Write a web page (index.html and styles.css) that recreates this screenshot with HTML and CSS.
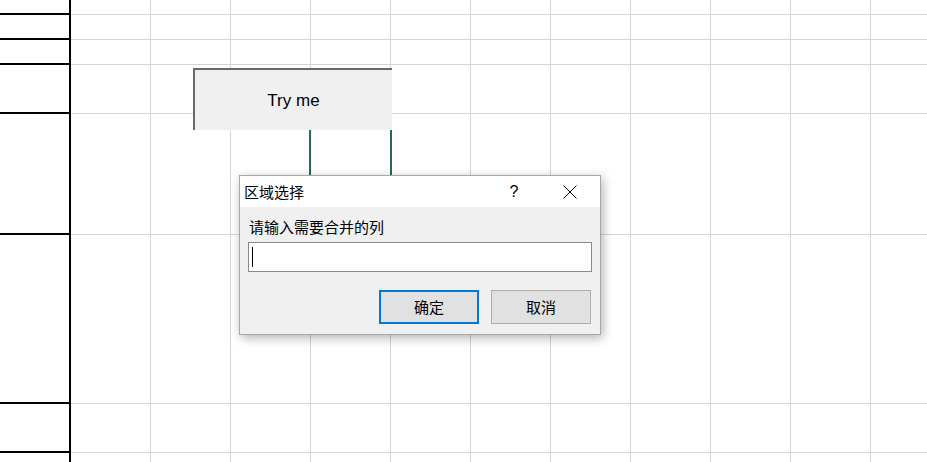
FILE: index.html
```html
<!DOCTYPE html>
<html lang="zh">
<head>
  <meta charset="UTF-8">
  <title>区域选择</title>
  <link rel="stylesheet" href="styles.css">
</head>
<body>

  <!-- worksheet grid -->
  <div class="sheet" id="sheet"></div>

  <!-- selected cell -->
  <div class="selection"></div>

  <!-- shape button on the sheet -->
  <button class="shape-btn">Try me</button>

  <!-- input dialog -->
  <div class="dialog">
    <div class="title-bar">
      <span class="title">区域选择</span>
      <span class="help">?</span>
      <span class="close">
        <svg width="14" height="14" viewBox="0 0 14 14">
          <path d="M0.5 0.5 L13.5 13.5 M13.5 0.5 L0.5 13.5" stroke="#000" stroke-width="1" fill="none"/>
        </svg>
      </span>
    </div>
    <div class="dialog-body">
      <label class="prompt" for="cols">请输入需要合并的列</label>
      <div class="input-box"><span class="caret"></span></div>
      <div class="actions">
        <button class="btn default">确定</button>
        <button class="btn">取消</button>
      </div>
    </div>
  </div>

  <script>
    const rows = 8;
    const cols = 12;
    const sheet = document.getElementById('sheet');
    let html = '';
    for (let r = 0; r < rows; r++) {
      for (let c = 0; c < cols; c++) {
        html += `<div class="cell${c === 0 ? ' first' : ''}"></div>`;
      }
    }
    sheet.innerHTML = html;
  </script>
</body>
</html>
```

FILE: styles.css
```css
body {
  margin: 0;
  padding: 0;
  width: 927px;
  height: 462px;
  overflow: hidden;
  background: #fff;
  font-family: "Liberation Sans", "Noto Sans CJK SC", sans-serif;
  position: relative;
}
.sheet {
  display: grid;
  grid-template-columns: 71px repeat(11, 80px);
  grid-template-rows: 15px 25px 25px 49px 121px 169px 49px 30px;
}
.cell {
  box-sizing: border-box;
  border-right: 1px solid #d6d6d6;
  border-bottom: 1px solid #d6d6d6;
}
.cell.first {
  border-right: 2px solid #000;
  border-bottom: 2px solid #000;
}
.selection {
  position: absolute;
  left: 309px;
  top: 113px;
  width: 83px;
  height: 122px;
  box-sizing: border-box;
  border: 2px solid #1f6b55;
}
.shape-btn {
  position: absolute;
  left: 193px;
  top: 68px;
  width: 199px;
  height: 62px;
  box-sizing: border-box;
  margin: 0;
  padding: 2px 0 0 0;
  background: #f0f0f0;
  border: none;
  border-top: 2px solid #6a6a6a;
  border-left: 2px solid #6a6a6a;
  font-family: "Liberation Sans", sans-serif;
  font-size: 17px;
  color: #000;
}
.dialog {
  position: absolute;
  left: 239px;
  top: 175px;
  width: 362px;
  height: 160px;
  box-sizing: border-box;
  border: 1px solid #a8a8a8;
  background: #f0f0f0;
  box-shadow: 2px 3px 10px rgba(0, 0, 0, 0.3);
  font-family: "Noto Sans CJK SC", "Liberation Sans", sans-serif;
  font-size: 15px;
  color: #000;
}
.title-bar {
  height: 31px;
  background: #fff;
  display: flex;
  align-items: center;
  padding-left: 4px;
}
.title {
  flex: 1;
  line-height: 20px;
}
.help {
  width: 14px;
  text-align: center;
  font-family: "Liberation Sans", sans-serif;
  font-size: 16px;
  margin-right: 42px;
}
.close {
  display: flex;
  width: 14px;
  height: 14px;
  margin-right: 23px;
}
.dialog-body {
  padding: 10px 8px 0 8px;
}
.prompt {
  display: block;
  line-height: 20px;
  height: 20px;
  padding-left: 1px;
}
.input-box {
  margin-top: 5px;
  height: 30px;
  box-sizing: border-box;
  border: 1px solid #8a8a8a;
  background: #fff;
  display: flex;
  align-items: center;
  padding-left: 3px;
}
.caret {
  width: 1px;
  height: 20px;
  background: #000;
}
.actions {
  display: flex;
  justify-content: flex-end;
  gap: 12px;
  margin-top: 18px;
  padding-right: 1px;
}
.btn {
  width: 100px;
  height: 34px;
  box-sizing: border-box;
  margin: 0;
  padding: 0 0 2px 0;
  background: #e1e1e1;
  border: 1px solid #adadad;
  font-family: "Noto Sans CJK SC", sans-serif;
  font-size: 15px;
  color: #000;
}
.btn.default {
  border: 2px solid #0078d7;
}
```
